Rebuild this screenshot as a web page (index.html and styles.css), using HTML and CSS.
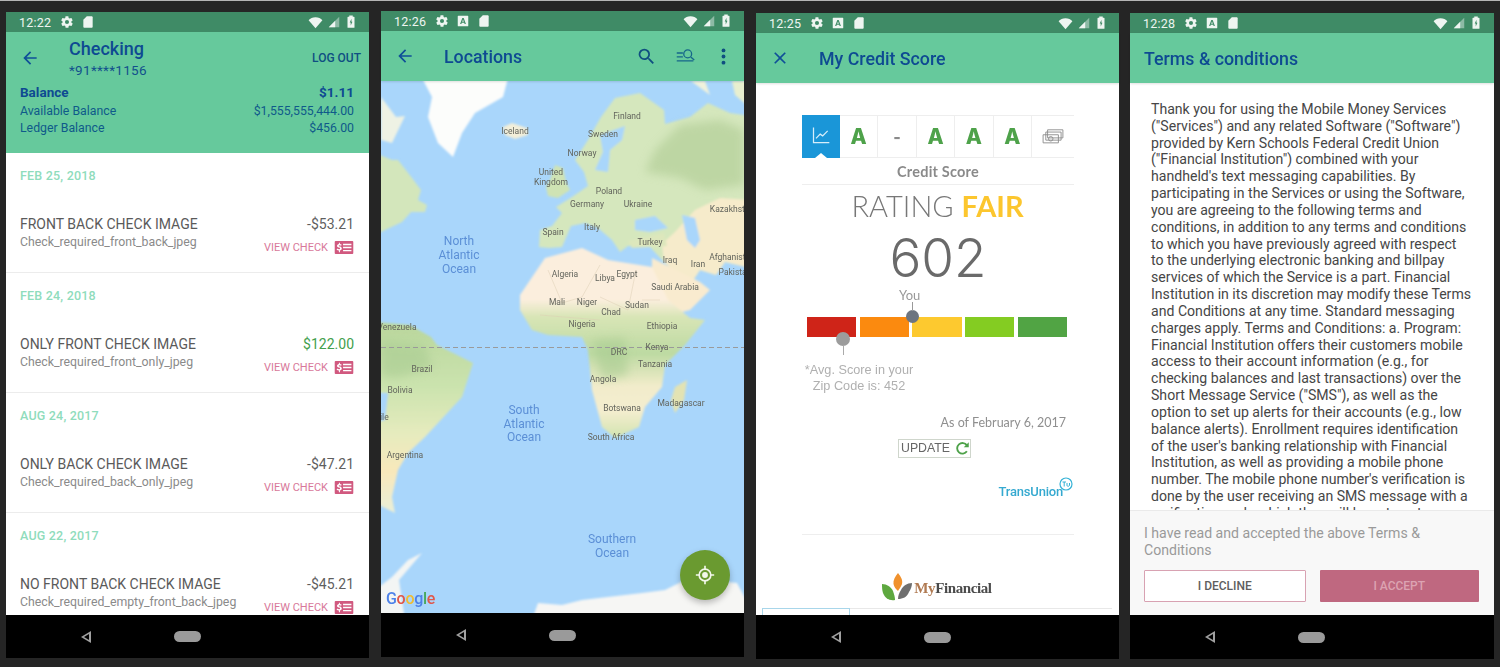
FILE: index.html
```html
<!DOCTYPE html>
<html lang="en">
<head>
<meta charset="utf-8">
<title>Mobile banking screens</title>
<link rel="stylesheet" href="styles.css">
</head>
<body>
<svg class="sprite" aria-hidden="true">
  <defs>
    <symbol id="gear" viewBox="0 0 24 24"><path fill="currentColor" d="M19.4 13c0-.3.1-.6.1-1s0-.7-.1-1l2.1-1.6c.2-.2.2-.4.1-.6l-2-3.5c-.1-.2-.4-.3-.6-.2l-2.5 1c-.5-.4-1.100-.7-1.700-1L14.400 2.400c0-.2-.2-.4-.5-.4h-4c-.2 0-.4.2-.5.4L9 5.100c-.6.2-1.100.6-1.700 1l-2.500-1c-.2-.1-.5 0-.6.2l-2 3.500c-.1.2-.1.500.1.600L4.500 11c0 .3-.1.700-.1 1s0 .7.1 1l-2.100 1.600c-.2.200-.2.400-.1.600l2 3.500c.1.200.4.300.6.200l2.500-1c.5.400 1.100.700 1.700 1l.4 2.600c0 .2.2.4.5.4h4c.2 0 .4-.2.5-.4l.4-2.600c.6-.3 1.200-.6 1.700-1l2.500 1c.2.100.5 0 .6-.2l2-3.500c.1-.2.1-.5-.1-.6zM12 15.500a3.500 3.500 0 1 1 0-7 3.500 3.500 0 0 1 0 7z"/></symbol>
    <symbol id="sd" viewBox="0 0 24 24"><path fill="currentColor" d="M18 2h-8L4 8v12c0 1.100.9 2 2 2h12c1.100 0 2-.9 2-2V4c0-1.100-.9-2-2-2z"/></symbol>
    <symbol id="abox" viewBox="0 0 24 24"><path fill="currentColor" fill-rule="evenodd" d="M4 3h16a1 1 0 0 1 1 1v16a1 1 0 0 1-1 1H4a1 1 0 0 1-1-1V4a1 1 0 0 1 1-1zM10.800 7L7 17h2.200l.7-2h4.200l.7 2H17L13.200 7zM12 9.500l1.400 3.800h-2.800z"/></symbol>
    <symbol id="wifi" viewBox="0 0 24 24"><path fill="currentColor" d="M12 21L1 8.500C3.500 5.500 7.500 3.500 12 3.500s8.500 2 11 5z"/></symbol>
    <symbol id="signal" viewBox="0 0 24 24"><path fill="currentColor" opacity=".45" d="M21 3v18H3z"/><path fill="currentColor" d="M14 10v11H3z"/></symbol>
    <symbol id="battery" viewBox="0 0 24 24"><path fill="currentColor" fill-rule="evenodd" d="M9 1h6v2h2a1 1 0 0 1 1 1v17a1 1 0 0 1-1 1H7a1 1 0 0 1-1-1V4a1 1 0 0 1 1-1h2zM12.800 6.500l-3 6.500h1.700v5l3-6.500h-1.700z"/></symbol>
    <symbol id="back" viewBox="0 0 24 24"><path fill="currentColor" d="M20 11H7.800l5.600-5.600L12 4l-8 8 8 8 1.400-1.400L7.800 13H20z"/></symbol>
    <symbol id="check" viewBox="0 0 20 14"><path fill="currentColor" fill-rule="evenodd" d="M1 0h18a1 1 0 0 1 1 1v12a1 1 0 0 1-1 1H1a1 1 0 0 1-1-1V1a1 1 0 0 1 1-1zM9 3v1.500h9V3zM9 6.300v1.500h9V6.300zM9 9.600v1.500h9V9.600zM4.500 2v1.200C3.300 3.400 2.500 4.200 2.500 5.200c0 2.300 3.300 1.500 3.300 2.800 0 .5-.5.800-1.200.800-.7 0-1.300-.3-1.800-.8L2 9.100c.6.600 1.500 1 2.500 1.100V12h1.100v-1.800C6.800 10 7.600 9.200 7.600 8c0-2.400-3.300-1.600-3.300-2.800 0-.5.400-.7 1-.7.5 0 1.100.2 1.500.6l.8-1c-.6-.5-1.200-.8-2-.9V2z"/></symbol>
  </defs>
</svg>

<main class="screens">

  <!-- Account -->
  <section class="phone phone-low">
    <div class="status">
      <span class="time">12:22</span>
      <svg class="st-icon"><use href="#gear"/></svg>
      <svg class="st-icon"><use href="#sd"/></svg>
      <span class="st-right">
        <svg class="st-wifi"><use href="#wifi"/></svg>
        <svg class="st-icon"><use href="#signal"/></svg>
        <svg class="st-icon"><use href="#battery"/></svg>
      </span>
    </div>
    <header class="acct-head">
      <div class="acct-top">
        <svg class="nav-icon"><use href="#back"/></svg>
        <div class="acct-title">
          <div class="title">Checking</div>
          <div class="acct-num">*91****1156</div>
        </div>
        <span class="logout">LOG OUT</span>
      </div>
      <div class="bal bal-main"><span>Balance</span><span>$1.11</span></div>
      <div class="bal"><span>Available Balance</span><span>$1,555,555,444.00</span></div>
      <div class="bal"><span>Ledger Balance</span><span>$456.00</span></div>
    </header>
    <div class="list">
      <article class="group">
        <div class="date">FEB 25, 2018</div>
        <div class="row"><span class="row-name">FRONT BACK CHECK IMAGE</span><span class="amount">-$53.21</span></div>
        <div class="row row-second"><span class="row-sub">Check_required_front_back_jpeg</span><span class="view">VIEW CHECK <svg class="view-icon"><use href="#check"/></svg></span></div>
      </article>
      <article class="group">
        <div class="date">FEB 24, 2018</div>
        <div class="row"><span class="row-name">ONLY FRONT CHECK IMAGE</span><span class="amount amount-in">$122.00</span></div>
        <div class="row row-second"><span class="row-sub">Check_required_front_only_jpeg</span><span class="view">VIEW CHECK <svg class="view-icon"><use href="#check"/></svg></span></div>
      </article>
      <article class="group">
        <div class="date">AUG 24, 2017</div>
        <div class="row"><span class="row-name">ONLY BACK CHECK IMAGE</span><span class="amount">-$47.21</span></div>
        <div class="row row-second"><span class="row-sub">Check_required_back_only_jpeg</span><span class="view">VIEW CHECK <svg class="view-icon"><use href="#check"/></svg></span></div>
      </article>
      <article class="group">
        <div class="date">AUG 22, 2017</div>
        <div class="row"><span class="row-name">NO FRONT BACK CHECK IMAGE</span><span class="amount">-$45.21</span></div>
        <div class="row row-second"><span class="row-sub">Check_required_empty_front_back_jpeg</span><span class="view">VIEW CHECK <svg class="view-icon"><use href="#check"/></svg></span></div>
      </article>
    </div>
    <nav class="softkeys"><span class="sk-back"></span><span class="sk-home"></span></nav>
  </section>

  <!-- Locations -->
  <section class="phone phone-high">
    <div class="status">
      <span class="time">12:26</span>
      <svg class="st-icon"><use href="#gear"/></svg>
      <svg class="st-icon"><use href="#abox"/></svg>
      <svg class="st-icon"><use href="#sd"/></svg>
      <span class="st-right">
        <svg class="st-wifi"><use href="#wifi"/></svg>
        <svg class="st-icon"><use href="#signal"/></svg>
        <svg class="st-icon"><use href="#battery"/></svg>
      </span>
    </div>
    <header class="bar">
      <svg class="nav-icon"><use href="#back"/></svg>
      <div class="title bar-title-nav">Locations</div>
      <span class="bar-actions">
        <svg class="act-icon" viewBox="0 0 24 24"><path fill="currentColor" d="M15.500 14h-.79l-.28-.27A6.470 6.470 0 0 0 16 9.500 6.500 6.500 0 1 0 9.500 16c1.610 0 3.090-.59 4.230-1.570l.27.28v.79l5 4.990L20.490 19l-4.990-5zm-6 0C7.010 14 5 11.990 5 9.500S7.010 5 9.500 5 14 7.010 14 9.500 11.990 14 9.500 14z"/></svg>
        <svg class="act-icon act-list" viewBox="0 0 24 24"><path fill="none" stroke="currentColor" stroke-width="1.500" d="M2 8h7M2 12.500h7M2 17h19"/><circle cx="14.500" cy="9" r="4.500" fill="none" stroke="currentColor" stroke-width="1.500"/><path stroke="currentColor" stroke-width="1.500" d="M18 12.500l4 3.500"/></svg>
        <svg class="act-icon act-more" viewBox="0 0 24 24"><circle cx="12" cy="5" r="2.200" fill="currentColor"/><circle cx="12" cy="12" r="2.200" fill="currentColor"/><circle cx="12" cy="19" r="2.200" fill="currentColor"/></svg>
      </span>
    </header>
    <div class="map">
      <svg class="map-svg" viewBox="0 0 363 532" preserveAspectRatio="none">
        <defs>
          <linearGradient id="afr" x1="0" y1="248" x2="0" y2="440" gradientUnits="userSpaceOnUse">
            <stop offset="0" stop-color="#fbeedd"/><stop offset=".27" stop-color="#fbeedd"/><stop offset=".36" stop-color="#d8e5b6"/><stop offset=".55" stop-color="#bddaa2"/><stop offset=".72" stop-color="#f2eccb"/><stop offset=".85" stop-color="#f4edcf"/><stop offset="1" stop-color="#cfe3ad"/>
          </linearGradient>
          <linearGradient id="sam" x1="0" y1="320" x2="0" y2="510" gradientUnits="userSpaceOnUse">
            <stop offset="0" stop-color="#b9d69c"/><stop offset=".35" stop-color="#cbe3ae"/><stop offset=".6" stop-color="#e6ebbe"/><stop offset=".8" stop-color="#f9e8bb"/><stop offset="1" stop-color="#eaeed6"/>
          </linearGradient>
          <filter id="soft" x="-5%" y="-5%" width="110%" height="110%"><feGaussianBlur stdDeviation="1"/></filter>
          <filter id="softer" x="-15%" y="-15%" width="130%" height="130%"><feGaussianBlur stdDeviation="5"/></filter>
        </defs>
        <g transform="translate(-381 -81)">
          <rect x="381" y="81" width="363" height="532" fill="#a9d6fb"/>
          <g filter="url(#soft)">
            <!-- Arctic islands and corners -->
            <path fill="#eef2e4" d="M381 97L396 117L405 116L392 143L381 140z"/>
            <path fill="#f0f2dc" d="M691 81L705 81L710 95z"/>
            <path fill="#e8efcf" d="M732 81L750 81L750 108L735 95z"/>
            <!-- Greenland -->
            <path fill="#fcfdfb" d="M422 78L508 78L503 97L475 113L462 133L453 157L438 143L428 117L432 97z"/>
            <!-- Iceland -->
            <path fill="#f3efd9" d="M503 127L512 123L527 128L528 135L515 139L505 135z"/>
            <!-- North America -->
            <path fill="#d3e6bb" d="M375 153L392 160L398 160L412 178L421 190L418 200L427 205L425 212L411 212L402 222L375 235z"/>
            <!-- UK -->
            <path fill="#cfe3b4" d="M546 187L550 180L555 165L563 168L566 182L570 190L558 198L548 196z"/>
            <!-- Eurasia -->
            <path fill="#d5e7bd" d="M539 247L540 230L552 226L562 213L556 207L572 197L588 186L584 172L575 160L588 140L601 117L615 98L640 93L664 110L665 124L690 117L708 103L730 113L750 116L750 268L725 262L716 275L700 270L690 285L664 262L650 247L628 246L620 252L612 240L598 228L585 223L571 226L562 247L549 248z"/>
            <!-- Central Asia -->
            <path fill="#f6ebcb" d="M695 210L720 198L750 200L750 268L725 262L716 275L700 270L690 285L664 262L662 244L675 232z"/>
            <!-- Baltic -->
            <path fill="#a9d6fb" d="M600 135L625 126L622 140L610 150L608 172L595 170L603 152z"/>
            <!-- Black sea and Caspian -->
            <path fill="#a9d6fb" d="M635 220L655 216L668 228L650 232L635 230z"/>
            <path fill="#a9d6fb" d="M682 215L695 218L700 240L695 248L687 240z"/>
            <!-- Turkey -->
            <path fill="#dde7bc" d="M628 241L664 233L667 246L632 248z"/>
            <!-- Arabia -->
            <path fill="#f9ebcf" d="M652 258L700 282L710 290L690 310L670 315L652 285z"/>
            <!-- Africa -->
            <path fill="url(#afr)" d="M520 295L545 258L582 248L608 260L652 267L668 300L690 318L705 320L685 345L665 365L662 387L645 407L639 427L615 438L602 427L592 390L588 350L582 337L548 335L532 330L520 310z"/>
            <!-- Madagascar -->
            <path fill="#e3e3b3" d="M687 380L684 400L675 413L671 400L675 387z"/>
            <!-- South America -->
            <path fill="url(#sam)" d="M375 322L410 325L431 337L437 345L473 363L462 397L425 437L408 453L398 470L392 497L395 513L375 503z"/>
            <path fill="#a9d6fb" d="M375 393L388 393L385 420L375 423z"/>
            <!-- Antarctica -->
            <path fill="#f6f6f4" d="M532 620L538 603L562 605L582 600L642 593L665 590L685 580L708 580L737 583L750 607L750 620z"/>
            <path fill="#f3f5f4" d="M375 590L392 577L408 560L422 553L399 580L405 620L375 620z"/>
          </g>
          <!-- Forested Russia, Congo and Amazon -->
          <g filter="url(#softer)" opacity=".6">
            <path fill="#aecb93" d="M655 150L680 125L720 120L744 130L744 185L705 190L680 178L645 172z"/>
            <path fill="#a9cc92" d="M381 340L425 345L432 368L395 378L381 375z"/>
            <path fill="#a9cc92" d="M592 340L625 338L628 375L602 380z"/>
          </g>
          <!-- Country borders -->
          <path fill="none" stroke="#dccfb4" stroke-width=".5" d="M548 270L562 303L582 297L600 265M600 297L628 310L636 270M642 300L660 300M540 315L600 320"/>
          <!-- Equator -->
          <path fill="none" stroke="#9a9a9a" stroke-width="1" stroke-dasharray="5 3" d="M381 347.500H744"/>
          <!-- Labels -->
          <g class="country">
            <text x="627" y="119">Finland</text><text x="515" y="134">Iceland</text><text x="603" y="137">Sweden</text>
            <text x="582" y="156">Norway</text><text x="551" y="175">United</text><text x="551" y="185">Kingdom</text>
            <text x="609" y="194">Poland</text><text x="587" y="207">Germany</text><text x="638" y="207">Ukraine</text>
            <text x="732" y="212">Kazakhstan</text><text x="553" y="235">Spain</text><text x="592" y="230">Italy</text>
            <text x="650" y="245">Turkey</text><text x="670" y="263">Iraq</text><text x="698" y="267">Iran</text>
            <text x="732" y="260">Afghanistan</text><text x="735" y="275">Pakistan</text><text x="565" y="277">Algeria</text>
            <text x="605" y="281">Libya</text><text x="627" y="277">Egypt</text><text x="675" y="290">Saudi Arabia</text>
            <text x="557" y="305">Mali</text><text x="587" y="305">Niger</text><text x="637" y="308">Sudan</text>
            <text x="611" y="315">Chad</text><text x="582" y="327">Nigeria</text><text x="662" y="329">Ethiopia</text>
            <text x="397" y="330">Venezuela</text><text x="422" y="372">Brazil</text><text x="400" y="393">Bolivia</text>
            <text x="382" y="420">hile</text><text x="405" y="458">Argentina</text><text x="619" y="355">DRC</text>
            <text x="657" y="350">Kenya</text><text x="655" y="367">Tanzania</text><text x="603" y="382">Angola</text>
            <text x="622" y="411">Botswana</text><text x="681" y="406">Madagascar</text><text x="611" y="440">South Africa</text>
          </g>
          <g class="ocean">
            <text x="459" y="245">North</text><text x="459" y="259">Atlantic</text><text x="459" y="273">Ocean</text>
            <text x="524" y="414">South</text><text x="524" y="428">Atlantic</text><text x="524" y="441">Ocean</text>
            <text x="612" y="543">Southern</text><text x="612" y="557">Ocean</text>
          </g>
          <text class="google" x="386" y="604"><tspan fill="#4d81e8">G</tspan><tspan fill="#e0584b">o</tspan><tspan fill="#f0bd33">o</tspan><tspan fill="#4d81e8">g</tspan><tspan fill="#48a85c">l</tspan><tspan fill="#e0584b">e</tspan></text>
        </g>
      </svg>
      <button class="fab" type="button" aria-label="My location">
        <svg class="fab-icon" viewBox="0 0 24 24"><circle cx="12" cy="12" r="3.500" fill="currentColor"/><circle cx="12" cy="12" r="7" fill="none" stroke="currentColor" stroke-width="2"/><path stroke="currentColor" stroke-width="2" d="M12 1v4M12 19v4M1 12h4M19 12h4"/></svg>
      </button>
    </div>
    <nav class="softkeys"><span class="sk-back"></span><span class="sk-home"></span></nav>
  </section>

  <!-- Credit score -->
  <section class="phone">
    <div class="status">
      <span class="time">12:25</span>
      <svg class="st-icon"><use href="#gear"/></svg>
      <svg class="st-icon"><use href="#abox"/></svg>
      <svg class="st-icon"><use href="#sd"/></svg>
      <span class="st-right">
        <svg class="st-wifi"><use href="#wifi"/></svg>
        <svg class="st-icon"><use href="#signal"/></svg>
        <svg class="st-icon"><use href="#battery"/></svg>
      </span>
    </div>
    <header class="bar">
      <svg class="nav-icon" viewBox="0 0 24 24"><path fill="currentColor" d="M19 6.400L17.600 5 12 10.600 6.400 5 5 6.400 10.600 12 5 17.600 6.400 19 12 13.400 17.600 19 19 17.600 13.400 12z"/></svg>
      <div class="title bar-title-nav">My Credit Score</div>
    </header>
    <div class="credit">
      <div class="tabs">
        <div class="tab tab-on">
          <svg class="tab-chart" viewBox="0 0 24 24"><path fill="none" stroke="#d7eefa" stroke-width="1.500" d="M3 3v18h19M6 16l5-5 3 2 6-6"/></svg>
        </div>
        <div class="tab">A</div>
        <div class="tab tab-dash">-</div>
        <div class="tab">A</div>
        <div class="tab">A</div>
        <div class="tab">A</div>
        <div class="tab tab-last">
          <svg class="tab-money" viewBox="0 0 24 20"><path fill="#fff" stroke="#8a8a8a" d="M6 2h17v9H6zM4 4.500h17v9H4zM1 7.500h17v9H1z"/><circle cx="9.500" cy="12" r="2.500" fill="none" stroke="#8a8a8a"/></svg>
        </div>
      </div>
      <div class="tab-label">Credit Score</div>
      <div class="rating">RATING <b class="fair">FAIR</b></div>
      <div class="score">602</div>
      <div class="you">You</div>
      <div class="meter">
        <span class="seg seg-1"></span><span class="seg seg-2"></span><span class="seg seg-3"></span><span class="seg seg-4"></span><span class="seg seg-5"></span>
        <span class="pin-you"></span>
        <span class="pin-avg"></span>
      </div>
      <div class="avg">*Avg. Score in your<br>Zip Code is: 452</div>
      <div class="asof">As of February 6, 2017</div>
      <div class="update-row">
        <span class="update">UPDATE
          <svg class="refresh" viewBox="0 0 24 24"><path fill="none" stroke="#4ea24a" stroke-width="3" d="M19 16.500A8.500 8.500 0 1 1 19 7"/><path fill="#4ea24a" d="M22 2v8h-8z"/></svg>
        </span>
      </div>
      <div class="tu"><span class="tu-word">TransUnion</span><svg class="tu-mark" viewBox="0 0 14 14"><circle cx="7" cy="7" r="6" fill="none" stroke="#35b2d6" stroke-width="1.200"/><path fill="none" stroke="#35b2d6" d="M3.500 5h3.500M5.200 5v4.500M8 6v2.500c0 1 2 1 2.500 0V6"/></svg></div>
      <div class="rule"></div>
      <div class="mf">
        <svg class="mf-mark" viewBox="0 0 30 28"><path fill="#f0912c" d="M16 0c3 4 5 7 4 11-1 3-3 5-4 7-2-2-4-4-4.500-7C11 7 13 4 16 0z"/><path fill="#5ea83f" d="M0 11c5 0 9 3 11 7 1 3 2 6 2 9-6 1-10-2-12-7-1-3-1-6-1-9z"/><path fill="#6f6f6f" d="M30 10c-5 0-9 3-11 7-2 3-3 6-3 9 5 0 9-2 11-7 2-3 3-6 3-9z"/></svg>
        <span class="mf-word"><span class="mf-my">My</span>Financial</span>
      </div>
      <div class="credit-foot"><span class="foot-box"></span></div>
    </div>
    <nav class="softkeys"><span class="sk-back"></span><span class="sk-home"></span></nav>
  </section>

  <!-- Terms -->
  <section class="phone phone-wide">
    <div class="status">
      <span class="time">12:28</span>
      <svg class="st-icon"><use href="#gear"/></svg>
      <svg class="st-icon"><use href="#abox"/></svg>
      <svg class="st-icon"><use href="#sd"/></svg>
      <span class="st-right">
        <svg class="st-wifi"><use href="#wifi"/></svg>
        <svg class="st-icon"><use href="#signal"/></svg>
        <svg class="st-icon"><use href="#battery"/></svg>
      </span>
    </div>
    <header class="bar bar-plain">
      <div class="title">Terms &amp; conditions</div>
    </header>
    <div class="terms">
      <div class="terms-scroll">
        <p class="terms-text">Thank you for using the Mobile Money Services<br>("Services") and any related Software ("Software")<br>provided by Kern Schools Federal Credit Union<br>("Financial Institution") combined with your<br>handheld's text messaging capabilities. By<br>participating in the Services or using the Software,<br>you are agreeing to the following terms and<br>conditions, in addition to any terms and conditions<br>to which you have previously agreed with respect<br>to the underlying electronic banking and billpay<br>services of which the Service is a part. Financial<br>Institution in its discretion may modify these Terms<br>and Conditions at any time. Standard messaging<br>charges apply. Terms and Conditions: a. Program:<br>Financial Institution offers their customers mobile<br>access to their account information (e.g., for<br>checking balances and last transactions) over the<br>Short Message Service ("SMS"), as well as the<br>option to set up alerts for their accounts (e.g., low<br>balance alerts). Enrollment requires identification<br>of the user's banking relationship with Financial<br>Institution, as well as providing a mobile phone<br>number. The mobile phone number's verification is<br>done by the user receiving an SMS message with a<br>verification code which they will have to enter on</p>
      </div>
      <div class="terms-foot">
        <p class="accept-note">I have read and accepted the above Terms &amp; Conditions</p>
        <div class="btns">
          <button class="btn btn-decline" type="button">I DECLINE</button>
          <button class="btn btn-accept" type="button">I ACCEPT</button>
        </div>
      </div>
    </div>
    <nav class="softkeys"><span class="sk-back"></span><span class="sk-home"></span></nav>
  </section>
</main>
</body>
</html>
```

FILE: styles.css
```css
* { box-sizing: border-box; }
html, body { margin: 0; height: 667px; overflow: hidden; }
body {
  background: #252525;
  border-top: 1px solid #b5b5b5;
  font-family: Roboto, "Liberation Sans", sans-serif;
}
.sprite { display: none; }

.screens { display: flex; gap: 12px; padding-left: 6px; filter: blur(.45px); }
.phone { width: 363px; height: 646px; margin-top: 12px; display: flex; flex-direction: column; background: #000; }
.phone-low { margin-top: 11px; }
.phone-high { margin-top: 10px; }
.phone-wide { width: 364px; margin-left: -1px; }

/* Status bar */
.status { height: 20px; flex: none; background: #3f8b66; color: #eef5f1; display: flex; align-items: center; gap: 7px; padding: 0 11px 0 13px; }
.time { font-size: 12.500px; margin-right: 2px; letter-spacing: .2px; }
.st-icon { width: 14px; height: 14px; }
.st-wifi { width: 17px; height: 15px; }
.st-right { margin-left: auto; display: flex; align-items: center; gap: 3px; }

/* App bars */
.bar { height: 50px; flex: none; background: #66c99c; color: #0f4c92; display: flex; align-items: center; padding: 0 10px 0 14px; box-shadow: 0 1px 2px rgba(0,0,0,.12); z-index: 1; }
.bar-plain { padding-left: 14px; }
.title { font-size: 17.800px; font-weight: 500; color: #0e4a92; }
.bar-title-nav { margin-left: 29px; }
.nav-icon { width: 20px; height: 20px; color: #0f4f98; flex: none; }
.bar-actions { margin-left: auto; display: flex; align-items: center; gap: 18px; }
.act-icon { width: 21px; height: 21px; color: #0f4f80; }
.act-list { color: #16668a; }
.act-more { margin-left: -1px; }

/* Account */
.acct-head { height: 121px; flex: none; background: #66c99c; color: #0f5a8a; padding: 5px 15px 0 14px; font-size: 12.300px; }
.acct-top { display: flex; align-items: center; height: 41px; }
.acct-title { margin-left: 29px; flex: 1; }
.acct-title .title { font-size: 18px; line-height: 24px; }
.acct-num { font-size: 13.500px; line-height: 18px; color: #12508c; letter-spacing: .3px; }
.logout { font-size: 12px; font-weight: 500; color: #0f4f82; margin-right: -7px; margin-top: 1px; }
.bal { display: flex; justify-content: space-between; line-height: 17px; margin-left: 0; }
.bal-main { font-size: 13.500px; font-weight: 700; color: #0e4a92; margin-top: 4px; line-height: 21px; }

.list { height: 462px; background: #fff; overflow: hidden; flex: none; }
.group { height: 120px; padding: 15px 15px 0 14px; border-bottom: 1px solid #ececec; }
.date { font-size: 12.500px; font-weight: 500; color: #8fdcbc; line-height: 15px; margin-bottom: 32px; letter-spacing: .2px; }
.row { display: flex; justify-content: space-between; }
.row-second { margin-top: 1px; }
.row-name { font-size: 14px; line-height: 18px; color: #5a5a5a; }
.amount { font-size: 14px; line-height: 18px; color: #5f5f5f; }
.amount-in { color: #43a04d; }
.row-sub { font-size: 12.300px; line-height: 16px; color: #8a8a8a; }
.view { font-size: 11px; color: #d8789a; display: flex; align-items: center; gap: 6px; margin-top: 6px; height: 14px; }
.view-icon { width: 20px; height: 13px; color: #d1597f; }

/* Soft keys */
.softkeys { flex: 1; background: #000; display: flex; align-items: center; padding-left: 75px; gap: 83px; }
.sk-back { position: relative; width: 0; height: 0; border-top: 6px solid transparent; border-bottom: 6px solid transparent; border-right: 10px solid #a0a0a0; }
.sk-back::after { content: ""; position: absolute; left: 3px; top: -3px; border-top: 3px solid transparent; border-bottom: 3px solid transparent; border-right: 5px solid #000; }
.sk-home { width: 27px; height: 11px; border-radius: 6px; background: #9a9a9a; }

/* Map */
.map { height: 532px; flex: none; position: relative; overflow: hidden; background: #a9d6fb; }
.map-svg { display: block; width: 363px; height: 532px; }
.country text { font: 8.500px Roboto, sans-serif; fill: #62645c; text-anchor: middle; }
.ocean text { font: 12px Roboto, sans-serif; fill: #5b8fd6; text-anchor: middle; }
.google { font: 500 16px Roboto, sans-serif; letter-spacing: -.3px; }
.fab { position: absolute; right: 14px; bottom: 13px; width: 50px; height: 50px; border: 0; border-radius: 50%; padding: 0; background: #6a9a30; color: #f2f7ea; box-shadow: 0 3px 6px rgba(0,0,0,.25); display: flex; align-items: center; justify-content: center; }
.fab-icon { width: 20px; height: 20px; }

/* Credit */
.credit { height: 532px; flex: none; background: #fff; overflow: hidden; padding: 32px 45px 0 46px; display: flex; flex-direction: column; }
.tabs { display: flex; height: 43px; flex: none; border-top: 1px solid #eee; border-bottom: 1px solid #eee; }
.tab { width: 38.500px; border-right: 1px solid #eee; color: #4ea24a; font: 800 21px Inter, Roboto, sans-serif; display: flex; align-items: center; justify-content: center; }
.tab-dash { color: #8a8a8a; font-size: 16px; }
.tab-last { border-right: 0; width: 42px; }
.tab-on { background: #1a96d8; border: 0; margin: -1px 0; height: 43px; position: relative; width: 38px; }
.tab-on::after { content: ""; position: absolute; left: 13px; bottom: 0; border-left: 6px solid transparent; border-right: 6px solid transparent; border-bottom: 5px solid #fff; }
.tab-chart { width: 20px; height: 20px; margin-top: -3px; }
.tab-money { width: 22px; height: 18px; }
.tab-label { font: 700 14.500px Lato, Roboto, sans-serif; color: #8a8a8a; text-align: center; height: 27px; flex: none; line-height: 28px; border-bottom: 1px solid #eee; letter-spacing: .2px; }
.rating { font: 300 29px Lato, Roboto, sans-serif; color: #777; text-align: center; line-height: 42px; height: 41px; flex: none; margin-right: 1px; }
.fair { color: #fcc62e; font-weight: 700; }
.score { font: 300 53px Inter, Roboto, sans-serif; color: #6a6a6a; text-align: center; line-height: 52px; height: 56px; flex: none; margin-top: 6px; }
.you { font: 400 13px Lato, Roboto, sans-serif; color: #999; line-height: 16px; height: 16px; flex: none; padding-left: 97px; margin-top: -1px; }
.meter { display: flex; flex: none; gap: 3.500px; height: 20px; margin: 14px 7px 0 5px; position: relative; }
.seg { flex: 1; }
.seg-1 { background: #cf2418; }
.seg-2 { background: #fb8a0f; }
.seg-3 { background: #fdc92f; }
.seg-4 { background: #84cc22; }
.seg-5 { background: #51a444; }
.pin-you { position: absolute; left: 99px; top: -7px; width: 13px; height: 13px; border-radius: 50%; background: #6d7580; }
.pin-you::before { content: ""; position: absolute; left: 6px; top: -8px; width: 1px; height: 9px; background: #999; }
.pin-avg { position: absolute; left: 29px; top: 15px; width: 14px; height: 14px; border-radius: 50%; background: #9c9c9c; }
.pin-avg::after { content: ""; position: absolute; left: 6.500px; top: 13px; width: 1px; height: 10px; background: #aaa; }
.avg { font: 400 12.700px/16px "Liberation Sans", sans-serif; color: #b0b0b0; text-align: center; width: 110px; flex: none; margin: 25px 0 0 2px; }
.asof { font: 400 12.500px Lato, Roboto, sans-serif; color: #8f8f8f; text-align: right; margin: 21px 8px 0 0; line-height: 16px; flex: none; }
.update-row { margin: 8px 0 0 96px; flex: none; }
.update { width: 73px; height: 19px; border: 1px solid #cfd6cc; color: #666; font: 400 12.300px/17px "Liberation Sans", sans-serif; display: flex; align-items: center; justify-content: space-between; padding: 0 0 0 2px; }
.refresh { width: 15px; height: 15px; flex: none; }
.tu { display: flex; justify-content: flex-end; align-items: flex-start; margin: 19px 1px 0 0; height: 48px; flex: none; }
.tu-word { font: 500 13px Roboto, sans-serif; color: #35a9d0; letter-spacing: -.2px; margin-top: 7px; }
.tu-mark { width: 14px; height: 14px; margin-left: -4px; }
.rule { border-top: 1px solid #eee; margin-top: 9px; flex: none; }
.mf { display: flex; flex: none; align-items: center; justify-content: center; margin: 37px 0 0 0; height: 30px; gap: 2px; padding-right: 2px; }
.mf-mark { width: 30px; height: 28px; }
.mf-word { font: 700 15px "Liberation Serif", serif; color: #4a4a4a; letter-spacing: -.4px; margin-top: 3px; }
.mf-my { color: #b07a52; }
.credit-foot { border-top: 1px solid #e8e8e8; margin: 6px -38px 0 -40px; flex: 1; }
.foot-box { display: block; width: 88px; height: 12px; margin-top: -1px; border: 1px solid #a8d6ea; border-bottom: 0; }

/* Terms */
.terms { height: 532px; flex: none; display: flex; flex-direction: column; background: #fff; overflow: hidden; }
.terms-scroll { height: 427px; flex: none; overflow: hidden; padding: 18px 8px 0 21px; }
.terms-text { margin: 0; font-size: 14.100px; line-height: 16.830px; color: #464646; white-space: nowrap; }
.terms-foot { flex: 1; background: #f8f8f8; border-top: 1px solid #eaeaea; padding: 14px 15px 0 14px; }
.accept-note { margin: 0; font-size: 14.100px; line-height: 16.500px; color: #9a9a9a; }
.btns { display: flex; gap: 14px; margin-top: 12px; }
.btn { flex: 1 1 0; min-width: 0; height: 32px; font: 500 12px Roboto, sans-serif; border-radius: 1px; padding: 0; }
.btn-decline { background: #fff; border: 1px solid #d8a2b2; color: #5e5e5e; }
.btn-accept { background: #bf6880; border: 0; color: #dca3b2; }
```
